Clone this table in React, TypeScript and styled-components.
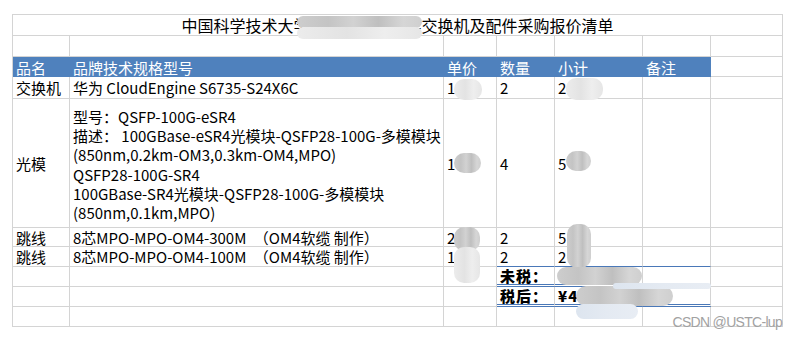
import React from 'react'
import styled, { createGlobalStyle, css } from 'styled-components'

const GRID = '#d4d4d4'
const BLUE = '#4f81bd'
const LINE_BLUE = '#4a78b8'

const GlobalStyle = createGlobalStyle`
  html, body {
    margin: 0;
    padding: 0;
    background: #fff;
  }
  body {
    font-family: "Noto Sans CJK SC", "Noto Sans", sans-serif;
    color: #000;
  }
`

const Page = styled.div`
  width: 796px;
  height: 337px;
  padding: 14px 0 0 12px;
  box-sizing: border-box;
  overflow: hidden;
`

const Sheet = styled.div`
  position: relative;
  display: grid;
  grid-template-columns: 57px 374px 53px 58px 88px 68px 72px;
  grid-template-rows: 21px 21px 20px 22px 129px 19px 20px 20px 20px 20px;
  width: 771px;
  box-sizing: border-box;
  border-left: 1px solid ${GRID};
  border-top: 1px solid ${GRID};
`

type CellProps = {
  $span?: number
  $head?: boolean
  $center?: boolean
  $bottom?: 'blue' | 'double'
  $bold?: boolean
}

const Cell = styled.div<CellProps>`
  grid-column: span ${({ $span }) => $span || 1};
  display: flex;
  align-items: center;
  justify-content: ${({ $center }) => ($center ? 'center' : 'flex-start')};
  box-sizing: border-box;
  padding: 1px 3px 0;
  border-right: 1px solid ${GRID};
  border-bottom: 1px solid ${GRID};
  font-size: 15px;
  line-height: 18px;
  white-space: nowrap;
  overflow: visible;
  ${({ $head }) =>
    $head &&
    css`
      background: ${BLUE};
      color: #fff;
      border-right-color: ${BLUE};
      border-bottom-color: ${BLUE};
      padding-top: 2px;
    `}
  ${({ $bottom }) =>
    $bottom === 'blue' &&
    css`
      border-bottom-color: ${LINE_BLUE};
    `}
  ${({ $bottom }) =>
    $bottom === 'double' &&
    css`
      border-bottom: 3px double ${LINE_BLUE};
    `}
  ${({ $bold }) =>
    $bold &&
    css`
      font-weight: 900;
      letter-spacing: 1px;
    `}
`

const Title = styled(Cell)`
  font-size: 16px;
  padding-top: 0;
`

const Lines = styled.div`
  display: flex;
  flex-direction: column;
  font-size: 15px;
  line-height: 19.3px;
  padding-top: 2px;
`

const Mask = styled.div<{ $x: number; $y: number; $w: number; $h: number; $tone?: 'dark' | 'light' | 'blue' }>`
  position: absolute;
  left: ${({ $x }) => $x}px;
  top: ${({ $y }) => $y}px;
  width: ${({ $w }) => $w}px;
  height: ${({ $h }) => $h}px;
  border-radius: ${({ $h }) => Math.min(10, $h / 2)}px;
  background: ${({ $tone }) =>
    $tone === 'light'
      ? 'linear-gradient(90deg, #ececec, #e3e3e3 40%, #eeeeee 70%, #e6e6e6)'
      : $tone === 'blue'
        ? 'linear-gradient(90deg, #dde5ef, #e4eaf2 50%, #e8edf4)'
        : 'linear-gradient(90deg, #cdcdcd, #c4c4c4 25%, #d2d2d2 45%, #bfbfbf 65%, #d6d6d6 85%, #cfcfcf)'};
  pointer-events: none;
`

const Watermark = styled.div`
  position: absolute;
  right: 1px;
  bottom: -3px;
  font-family: "Liberation Sans", Arial, sans-serif;
  font-size: 14px;
  letter-spacing: -0.7px;
  color: #a2a2a2;
  line-height: 16px;
`

const heads = ['品名', '品牌技术规格型号', '单价', '数量', '小计', '备注']

const Blank = ({ n }: { n: number }) => (
  <>
    {Array.from({ length: n }).map((_, i) => (
      <Cell key={i} />
    ))}
  </>
)

export default function App() {
  return (
    <Page>
      <GlobalStyle />
      <Sheet>
        <Title $span={7} $center>
          中国科学技术大学某某某某某某某交换机及配件采购报价清单
        </Title>

        <Blank n={7} />

        {heads.map((h) => (
          <Cell key={h} $head>
            {h}
          </Cell>
        ))}
        <Cell />

        <Cell>交换机</Cell>
        <Cell>华为 CloudEngine S6735-S24X6C</Cell>
        <Cell>1</Cell>
        <Cell>2</Cell>
        <Cell>2</Cell>
        <Blank n={2} />

        <Cell>光模</Cell>
        <Cell>
          <Lines>
            <span>型号：QSFP-100G-eSR4</span>
            <span>描述： 100GBase-eSR4光模块-QSFP28-100G-多模模块</span>
            <span>(850nm,0.2km-OM3,0.3km-OM4,MPO)</span>
            <span>QSFP28-100G-SR4</span>
            <span>100GBase-SR4光模块-QSFP28-100G-多模模块</span>
            <span>(850nm,0.1km,MPO)</span>
          </Lines>
        </Cell>
        <Cell>1</Cell>
        <Cell>4</Cell>
        <Cell>5</Cell>
        <Blank n={2} />

        <Cell>跳线</Cell>
        <Cell>8芯MPO-MPO-OM4-300M　（OM4软缆 制作）</Cell>
        <Cell>2</Cell>
        <Cell>2</Cell>
        <Cell>5</Cell>
        <Blank n={2} />

        <Cell>跳线</Cell>
        <Cell>8芯MPO-MPO-OM4-100M　（OM4软缆 制作）</Cell>
        <Cell>1</Cell>
        <Cell $bottom="blue">2</Cell>
        <Cell $bottom="blue">2</Cell>
        <Cell $bottom="blue" />
        <Cell />

        <Blank n={3} />
        <Cell $bottom="double" $bold>未税：</Cell>
        <Cell $bottom="double" />
        <Cell $bottom="double" />
        <Cell />

        <Blank n={3} />
        <Cell $bottom="double" $bold>税后：</Cell>
        <Cell $bottom="double" $bold>¥4</Cell>
        <Cell $bottom="double" />
        <Cell />

        <Blank n={7} />

        <Mask $x={284} $y={1} $w={125} $h={12} />
        <Mask $x={284} $y={12} $w={125} $h={12} $tone="light" />
        <Mask $x={441} $y={64} $w={28} $h={21} $tone="light" />
        <Mask $x={553} $y={63} $w={37} $h={22} $tone="light" />
        <Mask $x={441} $y={138} $w={27} $h={20} />
        <Mask $x={553} $y={136} $w={25} $h={20} />
        <Mask $x={441} $y={212} $w={26} $h={24} />
        <Mask $x={441} $y={232} $w={26} $h={36} $tone="light" />
        <Mask $x={554} $y={209} $w={24} $h={44} />
        <Mask $x={544} $y={252} $w={85} $h={18} />
        <Mask $x={563} $y={271} $w={97} $h={20} />
        <Mask $x={600} $y={268} $w={98} $h={6} $tone="blue" />
        <Mask $x={563} $y={289} $w={62} $h={15} $tone="blue" />
        <Watermark>CSDN @USTC-lup</Watermark>
      </Sheet>
    </Page>
  )
}
